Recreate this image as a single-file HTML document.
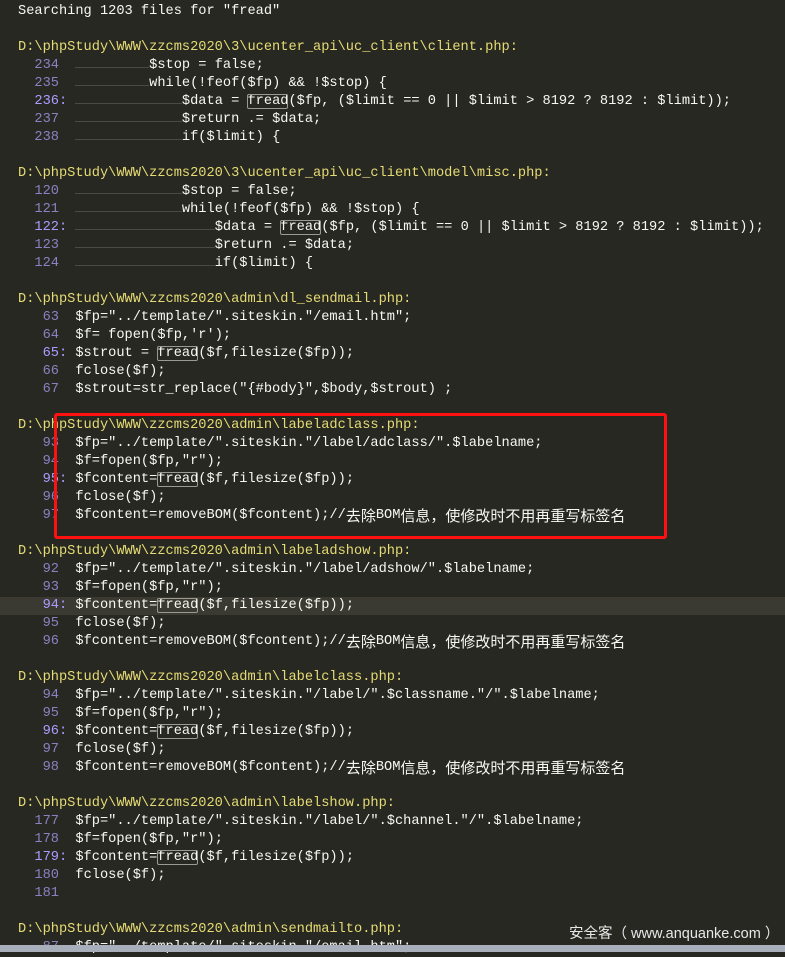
<!DOCTYPE html>
<html><head><meta charset="utf-8"><style>
html,body{margin:0;padding:0;}
body{width:785px;height:952px;background:#272822;overflow:hidden;position:relative;font-family:"Liberation Mono","Noto Sans CJK SC",monospace;font-size:13.67px;color:#f8f8f2;}
.r{position:absolute;left:18px;height:18px;line-height:18px;white-space:pre;}
.p{color:#e6db74;}
.n{color:#8b81c2;}
.m{color:#ae9bff;}
.c{font-family:"Noto Sans CJK SC",sans-serif;font-size:15px;display:inline-block;vertical-align:top;height:18px;line-height:17px;}
.i{background:linear-gradient(#4a4a42,#4a4a42) no-repeat 0 9px/100% 1px;}
.f{outline:1px solid #9a9a90;outline-offset:-1px;border-radius:2px;}
.hl{position:absolute;left:0;width:785px;height:18px;background:#3a3a32;}
.box{position:absolute;left:54px;top:413px;width:607px;height:120px;border:3px solid #f11;border-radius:3px;}
.wm{position:absolute;left:569px;top:922px;font-family:"Liberation Sans","Noto Sans CJK SC",sans-serif;font-size:14.5px;color:#e8e8e8;white-space:pre;}
.bot{position:absolute;left:0;top:945px;width:785px;height:7px;background:#a9afba;}
</style></head><body>
<div class="hl" style="top:597px"></div>
<div class="r" style="top:3px">Searching 1203 files for "fread"</div>

<div class="r p" style="top:39px">D:\phpStudy\WWW\zzcms2020\3\ucenter_api\uc_client\client.php:</div>
<div class="r" style="top:57px"><span class="n">  234</span>  <span class="i">         </span>$stop = false;</div>
<div class="r" style="top:75px"><span class="n">  235</span>  <span class="i">         </span>while(!feof($fp) &amp;&amp; !$stop) {</div>
<div class="r" style="top:93px"><span class="m">  236:</span> <span class="i">             </span>$data = <span class="f">fread</span>($fp, ($limit == 0 || $limit &gt; 8192 ? 8192 : $limit));</div>
<div class="r" style="top:111px"><span class="n">  237</span>  <span class="i">             </span>$return .= $data;</div>
<div class="r" style="top:129px"><span class="n">  238</span>  <span class="i">             </span>if($limit) {</div>

<div class="r p" style="top:165px">D:\phpStudy\WWW\zzcms2020\3\ucenter_api\uc_client\model\misc.php:</div>
<div class="r" style="top:183px"><span class="n">  120</span>  <span class="i">             </span>$stop = false;</div>
<div class="r" style="top:201px"><span class="n">  121</span>  <span class="i">             </span>while(!feof($fp) &amp;&amp; !$stop) {</div>
<div class="r" style="top:219px"><span class="m">  122:</span> <span class="i">                 </span>$data = <span class="f">fread</span>($fp, ($limit == 0 || $limit &gt; 8192 ? 8192 : $limit));</div>
<div class="r" style="top:237px"><span class="n">  123</span>  <span class="i">                 </span>$return .= $data;</div>
<div class="r" style="top:255px"><span class="n">  124</span>  <span class="i">                 </span>if($limit) {</div>

<div class="r p" style="top:291px">D:\phpStudy\WWW\zzcms2020\admin\dl_sendmail.php:</div>
<div class="r" style="top:309px"><span class="n">   63</span>  $fp="../template/".siteskin."/email.htm";</div>
<div class="r" style="top:327px"><span class="n">   64</span>  $f= fopen($fp,'r');</div>
<div class="r" style="top:345px"><span class="m">   65:</span> $strout = <span class="f">fread</span>($f,filesize($fp));</div>
<div class="r" style="top:363px"><span class="n">   66</span>  fclose($f);</div>
<div class="r" style="top:381px"><span class="n">   67</span>  $strout=str_replace("{#body}",$body,$strout) ;</div>

<div class="r p" style="top:417px">D:\phpStudy\WWW\zzcms2020\admin\labeladclass.php:</div>
<div class="r" style="top:435px"><span class="n">   93</span>  $fp="../template/".siteskin."/label/adclass/".$labelname;</div>
<div class="r" style="top:453px"><span class="n">   94</span>  $f=fopen($fp,"r");</div>
<div class="r" style="top:471px"><span class="m">   95:</span> $fcontent=<span class="f">fread</span>($f,filesize($fp));</div>
<div class="r" style="top:489px"><span class="n">   96</span>  fclose($f);</div>
<div class="r" style="top:507px"><span class="n">   97</span>  $fcontent=removeBOM($fcontent);//<span class="c">去除</span>BOM<span class="c">信息，使修改时不用再重写标签名</span></div>

<div class="r p" style="top:543px">D:\phpStudy\WWW\zzcms2020\admin\labeladshow.php:</div>
<div class="r" style="top:561px"><span class="n">   92</span>  $fp="../template/".siteskin."/label/adshow/".$labelname;</div>
<div class="r" style="top:579px"><span class="n">   93</span>  $f=fopen($fp,"r");</div>
<div class="r" style="top:597px"><span class="m">   94:</span> $fcontent=<span class="f">fread</span>($f,filesize($fp));</div>
<div class="r" style="top:615px"><span class="n">   95</span>  fclose($f);</div>
<div class="r" style="top:633px"><span class="n">   96</span>  $fcontent=removeBOM($fcontent);//<span class="c">去除</span>BOM<span class="c">信息，使修改时不用再重写标签名</span></div>

<div class="r p" style="top:669px">D:\phpStudy\WWW\zzcms2020\admin\labelclass.php:</div>
<div class="r" style="top:687px"><span class="n">   94</span>  $fp="../template/".siteskin."/label/".$classname."/".$labelname;</div>
<div class="r" style="top:705px"><span class="n">   95</span>  $f=fopen($fp,"r");</div>
<div class="r" style="top:723px"><span class="m">   96:</span> $fcontent=<span class="f">fread</span>($f,filesize($fp));</div>
<div class="r" style="top:741px"><span class="n">   97</span>  fclose($f);</div>
<div class="r" style="top:759px"><span class="n">   98</span>  $fcontent=removeBOM($fcontent);//<span class="c">去除</span>BOM<span class="c">信息，使修改时不用再重写标签名</span></div>

<div class="r p" style="top:795px">D:\phpStudy\WWW\zzcms2020\admin\labelshow.php:</div>
<div class="r" style="top:813px"><span class="n">  177</span>  $fp="../template/".siteskin."/label/".$channel."/".$labelname;</div>
<div class="r" style="top:831px"><span class="n">  178</span>  $f=fopen($fp,"r");</div>
<div class="r" style="top:849px"><span class="m">  179:</span> $fcontent=<span class="f">fread</span>($f,filesize($fp));</div>
<div class="r" style="top:867px"><span class="n">  180</span>  fclose($f);</div>
<div class="r" style="top:885px"><span class="n">  181</span></div>

<div class="r p" style="top:921px">D:\phpStudy\WWW\zzcms2020\admin\sendmailto.php:</div>
<div class="r" style="top:939px"><span class="n">   87</span>  $fp="../template/".siteskin."/email.htm";</div>

<div class="box"></div>
<div class="wm">安全客（ www.anquanke.com ）</div>
<div class="bot"></div>
</body></html>
